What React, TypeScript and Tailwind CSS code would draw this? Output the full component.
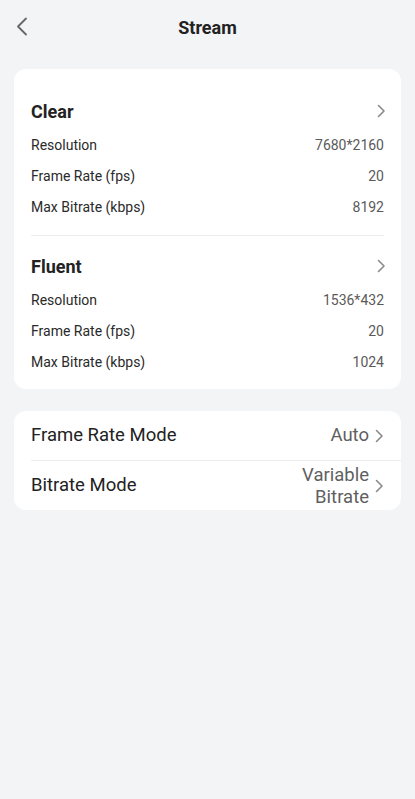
import React from "react";

const Chevron = ({ className = "" }: { className?: string }) => (
  <svg width="10" height="14" viewBox="0 0 10 14" className={className} fill="none">
    <path d="M2.5 1.5 L8 7 L2.5 12.5" stroke="#8a8a8a" strokeWidth="1.6" strokeLinecap="round" strokeLinejoin="round" />
  </svg>
);

const Row = ({ label, value }: { label: string; value: string }) => (
  <div className="flex h-[31px] items-center justify-between text-[14px]">
    <span className="text-[#2a2a2a]">{label}</span>
    <span className="text-[#5a5a5a]">{value}</span>
  </div>
);

const Section = ({ title, rows }: { title: string; rows: [string, string][] }) => (
  <div>
    <div className="flex h-[24px] items-center justify-between">
      <span className="text-[18px] font-bold text-[#222]">{title}</span>
      <Chevron className="mr-[-2px]" />
    </div>
    <div className="mt-[7px]">
      {rows.map(([l, v]) => (
        <Row key={l} label={l} value={v} />
      ))}
    </div>
  </div>
);

export default function App() {
  return (
    <div className="min-h-[799px] bg-[#f3f4f6]" style={{ fontFamily: "Roboto, 'Noto Sans', sans-serif" }}>
      <div className="relative flex h-[54px] items-center justify-center">
        <svg className="absolute left-[15px] top-[17px]" width="14" height="19" viewBox="0 0 14 19" fill="none">
          <path d="M11 1.5 L3 9.5 L11 17.5" stroke="#666" strokeWidth="1.8" strokeLinecap="round" strokeLinejoin="round" />
        </svg>
        <span className="text-[18px] font-bold text-[#222]">Stream</span>
      </div>

      <div className="mx-[14px] mt-[15px] rounded-[12px] bg-white pl-[17px] pr-[17px] pt-[30px] pb-[11px]">
        <Section
          title="Clear"
          rows={[
            ["Resolution", "7680*2160"],
            ["Frame Rate (fps)", "20"],
            ["Max Bitrate (kbps)", "8192"],
          ]}
        />
        <div className="mt-[12px] mb-[18px] h-px bg-[#ececec]" />
        <Section
          title="Fluent"
          rows={[
            ["Resolution", "1536*432"],
            ["Frame Rate (fps)", "20"],
            ["Max Bitrate (kbps)", "1024"],
          ]}
        />
      </div>

      <div className="mx-[14px] mt-[22px] rounded-[12px] bg-white pl-[17px]">
        <div className="flex h-[49px] items-center justify-between pr-[17px]">
          <span className="text-[18.5px] text-[#222]">Frame Rate Mode</span>
          <div className="flex items-center gap-[5px]">
            <span className="text-[18.5px] text-[#5f5f5f]">Auto</span>
            <Chevron />
          </div>
        </div>
        <div className="h-px bg-[#ececec]" />
        <div className="flex h-[49px] items-center justify-between pr-[17px]">
          <span className="text-[18.5px] text-[#222]">Bitrate Mode</span>
          <div className="flex items-center gap-[5px]">
            <span className="text-right text-[18.5px] leading-[22px] text-[#5f5f5f]">
              Variable
              <br />
              Bitrate
            </span>
            <Chevron />
          </div>
        </div>
      </div>
    </div>
  );
}
